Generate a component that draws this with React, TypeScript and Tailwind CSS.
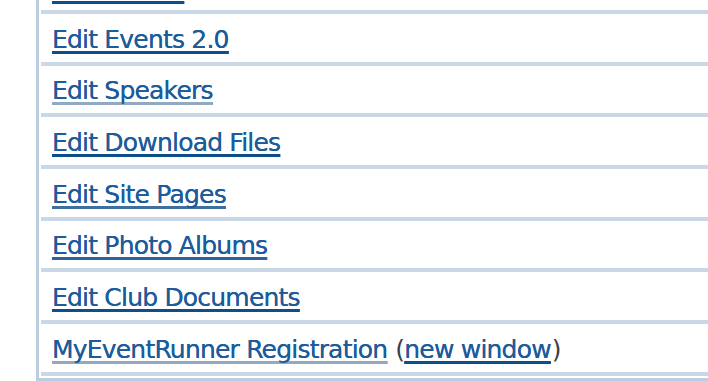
const links = [
  { label: 'Edit Events 2.0', line: 'decoration-[#0e4e8a]' },
  { label: 'Edit Speakers', line: 'decoration-[#93a9c0]' },
  { label: 'Edit Download Files', line: 'decoration-[#0e4e8a]' },
  { label: 'Edit Site Pages', line: 'decoration-[#3f6f9f]' },
  { label: 'Edit Photo Albums', line: 'decoration-[#2f6297]' },
  { label: 'Edit Club Documents', line: 'decoration-[#0e4e8a]' },
]

const linkCls =
  'text-[#1d5c9b] underline decoration-[3px] underline-offset-[3px] [text-decoration-skip-ink:none] [text-shadow:0_0_0.4px_currentColor]'

export default function App() {
  return (
    <div className="h-[381px] overflow-hidden bg-white font-['DejaVu_Sans',sans-serif] text-[25px] leading-none tracking-[-0.8px]">
      <div className="ml-[36px] mt-[-37px] border-b-[3px] border-l-[3px] border-[#bccde0] pb-[2px] pl-[2px]">
        <div className="flex h-[51px] items-end border-b-4 border-[#c9d7e6] pb-[8px] pl-[11px]">
          <a href="#" className={`${linkCls} decoration-[#0e4e8a]`}>
            Edit Events
          </a>
        </div>
        {links.map((l) => (
          <div
            key={l.label}
            className="flex h-[51.7px] items-end border-b-4 border-[#c9d7e6] pb-[10px] pl-[11px]"
          >
            <a href="#" className={`${linkCls} ${l.line}`}>
              {l.label}
            </a>
          </div>
        ))}
        <div className="flex h-[51.7px] items-end border-b-4 border-[#c9d7e6] pb-[10px] pl-[11px] text-[#3a3f4a]">
          <a href="#" className={`${linkCls} decoration-[#93a9c0]`}>
            MyEventRunner Registration
          </a>
          <span className="ml-[8px]">(</span>
          <a href="#" className={`${linkCls} decoration-[#0e4e8a]`}>
            new window
          </a>
          <span className="ml-[1px]">)</span>
        </div>
      </div>
    </div>
  )
}
